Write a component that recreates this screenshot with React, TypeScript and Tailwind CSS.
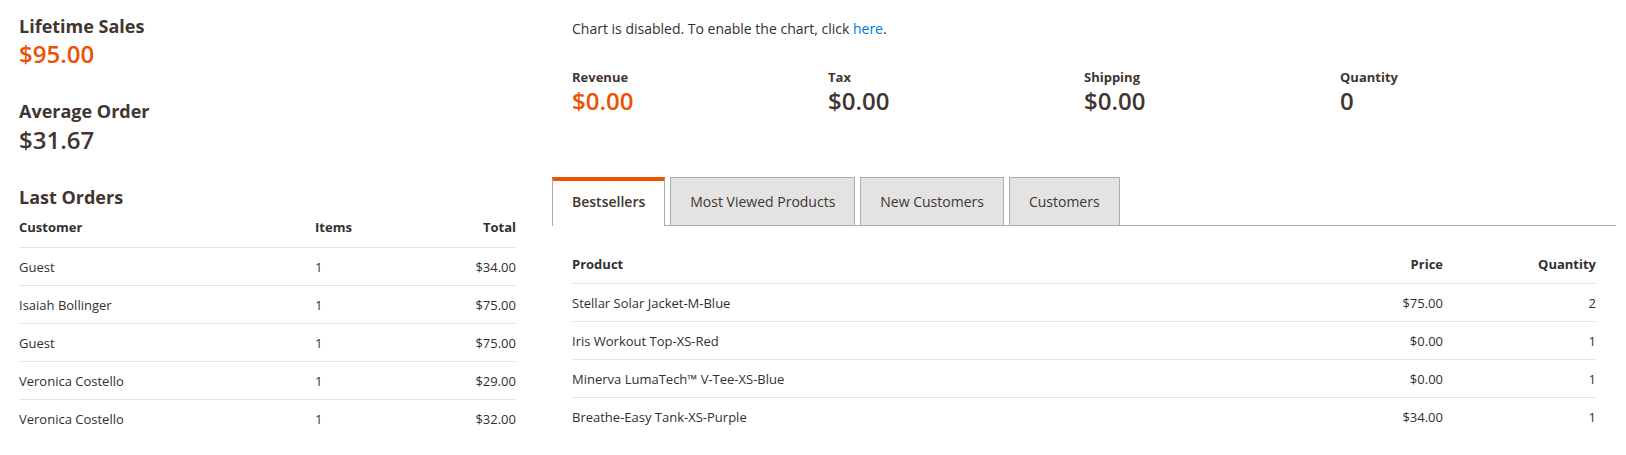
import React from 'react';

const lastOrders = [
  { customer: 'Guest', items: 1, total: '$34.00' },
  { customer: 'Isaiah Bollinger', items: 1, total: '$75.00' },
  { customer: 'Guest', items: 1, total: '$75.00' },
  { customer: 'Veronica Costello', items: 1, total: '$29.00' },
  { customer: 'Veronica Costello', items: 1, total: '$32.00' },
];

const bestsellers = [
  { product: 'Stellar Solar Jacket-M-Blue', price: '$75.00', qty: 2 },
  { product: 'Iris Workout Top-XS-Red', price: '$0.00', qty: 1 },
  { product: 'Minerva LumaTech™ V-Tee-XS-Blue', price: '$0.00', qty: 1 },
  { product: 'Breathe-Easy Tank-XS-Purple', price: '$34.00', qty: 1 },
];

const totals = [
  { label: 'Revenue', value: '$0.00', accent: true },
  { label: 'Tax', value: '$0.00' },
  { label: 'Shipping', value: '$0.00' },
  { label: 'Quantity', value: '0' },
];

const tabs = ['Bestsellers', 'Most Viewed Products', 'New Customers', 'Customers'];

export default function App() {
  return (
    <div className="min-h-[455px] bg-white flex pl-[19px] pr-[10px] font-['Open_Sans',sans-serif] text-[#303030]">
      {/* Left column */}
      <div className="w-[497px] shrink-0 pt-[13px]">
        <h2 className="text-[18px] leading-[26px] font-bold text-[#41362f]">Lifetime Sales</h2>
        <div className="text-[24px] leading-[30px] font-semibold text-[#eb5202]">$95.00</div>

        <h2 className="mt-[29px] text-[18px] leading-[26px] font-bold text-[#41362f]">Average Order</h2>
        <div className="mt-[1px] text-[24px] leading-[30px] font-semibold text-[#41362f]">$31.67</div>

        <h2 className="mt-[29px] text-[18px] leading-[26px] font-bold text-[#41362f]">Last Orders</h2>
        <div className="mt-[8px] text-[13px] leading-[18px]">
          <div className="grid grid-cols-[296px_1fr_120px] pb-[11px] border-b border-[#e3e3e3] font-bold text-[#303030]">
            <span>Customer</span>
            <span>Items</span>
            <span className="text-right">Total</span>
          </div>
          {lastOrders.map((o, i) => (
            <div
              key={i}
              className={
                i < lastOrders.length - 1
                  ? 'grid grid-cols-[296px_1fr_120px] pt-[10px] pb-[9px] border-b border-[#e3e3e3]'
                  : 'grid grid-cols-[296px_1fr_120px] pt-[10px] pb-[9px]'
              }
            >
              <span>{o.customer}</span>
              <span>{o.items}</span>
              <span className="text-right">{o.total}</span>
            </div>
          ))}
        </div>
      </div>

      {/* Right column */}
      <div className="ml-[36px] flex-1">
        <p className="pt-[19px] px-[20px] text-[14px] leading-[20px]">
          Chart is disabled. To enable the chart, click <a href="#" className="text-[#007bdb]">here</a>.
        </p>

        <div className="mt-[29px] px-[20px] grid grid-cols-[256px_256px_256px_256px]">
          {totals.map((t) => (
            <div key={t.label}>
              <div className="text-[13px] leading-[18px] font-bold text-[#41362f]">{t.label}</div>
              <div
                className={
                  t.accent
                    ? 'text-[24px] leading-[30px] font-semibold text-[#eb5202]'
                    : 'text-[24px] leading-[30px] font-semibold text-[#41362f]'
                }
              >
                {t.value}
              </div>
            </div>
          ))}
        </div>

        {/* Tabs */}
        <div className="mt-[61px] h-[49px] flex gap-[5px] border-b border-[#adadad]">
          {tabs.map((tab, i) =>
            i === 0 ? (
              <div
                key={tab}
                className="h-[49px] -mb-px bg-white border border-b-0 border-[#adadad] border-t-4 border-t-[#eb5202] px-[19px] pt-[11px] text-[14px] leading-[20px] font-semibold text-[#41362f]"
              >
                {tab}
              </div>
            ) : (
              <div
                key={tab}
                className="bg-[#e3e3e3] border border-b-0 border-[#adadad] px-[19px] pt-[14px] text-[14px] leading-[20px] text-[#41362f]"
              >
                {tab}
              </div>
            )
          )}
        </div>

        <div className="px-[20px] mt-[29px] text-[13px] leading-[18px]">
          <div className="grid grid-cols-[1fr_150px_153px] pb-[10px] border-b border-[#e3e3e3] font-bold">
            <span>Product</span>
            <span className="text-right">Price</span>
            <span className="text-right">Quantity</span>
          </div>
          {bestsellers.map((p, i) => (
            <div
              key={p.product}
              className={
                i < bestsellers.length - 1
                  ? 'grid grid-cols-[1fr_150px_153px] pt-[10px] pb-[9px] border-b border-[#e3e3e3]'
                  : 'grid grid-cols-[1fr_150px_153px] pt-[10px] pb-[9px]'
              }
            >
              <span>{p.product}</span>
              <span className="text-right">{p.price}</span>
              <span className="text-right">{p.qty}</span>
            </div>
          ))}
        </div>
      </div>
    </div>
  );
}
